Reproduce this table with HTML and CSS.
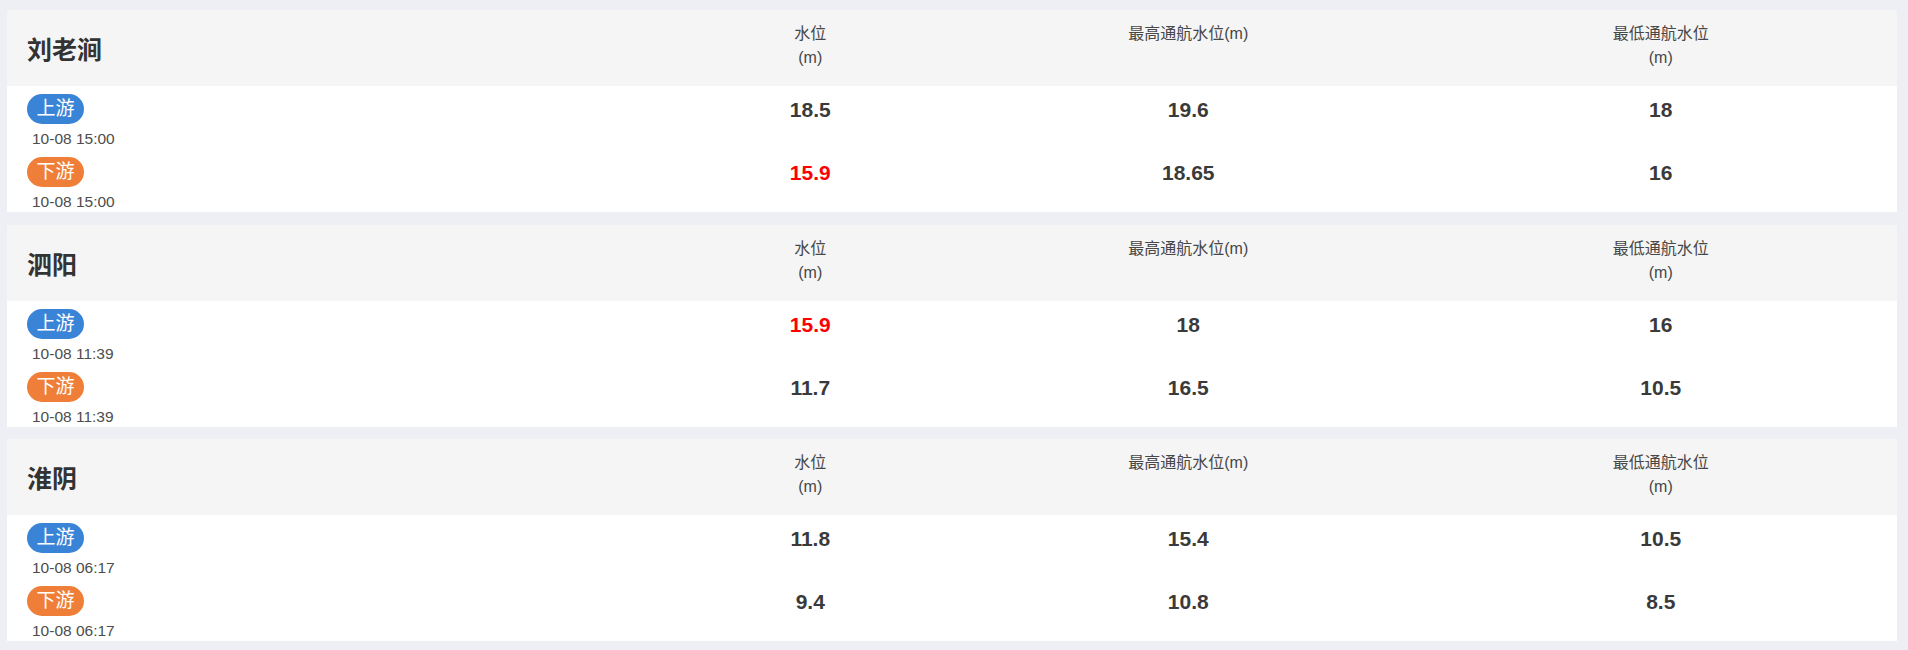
FILE: index.html
```html
<!DOCTYPE html>
<html lang="zh">
<head>
<meta charset="utf-8">
<title>水位</title>
<link rel="stylesheet" href="styles.css">
</head>
<body>
<div class="list">
  <section class="card">
    <div class="grid head">
      <div class="name">刘老涧</div>
      <div class="col">水位<br>(m)</div>
      <div class="col">最高通航水位(m)</div>
      <div class="col">最低通航水位<br>(m)</div>
    </div>
    <div class="grid item">
      <div class="loc"><span class="tag up">上游</span><span class="time">10-08 15:00</span></div>
      <div class="val">18.5</div>
      <div class="val">19.6</div>
      <div class="val">18</div>
    </div>
    <div class="grid item">
      <div class="loc"><span class="tag down">下游</span><span class="time">10-08 15:00</span></div>
      <div class="val warn">15.9</div>
      <div class="val">18.65</div>
      <div class="val">16</div>
    </div>
  </section>
  <section class="card">
    <div class="grid head">
      <div class="name">泗阳</div>
      <div class="col">水位<br>(m)</div>
      <div class="col">最高通航水位(m)</div>
      <div class="col">最低通航水位<br>(m)</div>
    </div>
    <div class="grid item">
      <div class="loc"><span class="tag up">上游</span><span class="time">10-08 11:39</span></div>
      <div class="val warn">15.9</div>
      <div class="val">18</div>
      <div class="val">16</div>
    </div>
    <div class="grid item">
      <div class="loc"><span class="tag down">下游</span><span class="time">10-08 11:39</span></div>
      <div class="val">11.7</div>
      <div class="val">16.5</div>
      <div class="val">10.5</div>
    </div>
  </section>
  <section class="card">
    <div class="grid head">
      <div class="name">淮阴</div>
      <div class="col">水位<br>(m)</div>
      <div class="col">最高通航水位(m)</div>
      <div class="col">最低通航水位<br>(m)</div>
    </div>
    <div class="grid item">
      <div class="loc"><span class="tag up">上游</span><span class="time">10-08 06:17</span></div>
      <div class="val">11.8</div>
      <div class="val">15.4</div>
      <div class="val">10.5</div>
    </div>
    <div class="grid item">
      <div class="loc"><span class="tag down">下游</span><span class="time">10-08 06:17</span></div>
      <div class="val">9.4</div>
      <div class="val">10.8</div>
      <div class="val">8.5</div>
    </div>
  </section>
</div>
</body>
</html>
```
FILE: styles.css
```css
html, body {
  margin: 0;
  padding: 0;
  background: #eeeff4;
}
body {
  padding: 10px 11px 0 7px;
  font-family: "Liberation Sans", Arial, "Noto Sans CJK SC", sans-serif;
  color: #333;
}
.list {
  display: flex;
  flex-direction: column;
  gap: 12.5px;
}
.card {
  background: #fff;
}
.grid {
  display: grid;
  grid-template-columns: 35% 15% 25% 25%;
}
.head {
  height: 76px;
  background: #f5f5f6;
}
.name {
  align-self: center;
  padding-left: 20px;
  font-size: 25px;
  font-weight: bold;
  color: #333;
  font-family: "Noto Sans CJK SC", sans-serif;
}
.col {
  padding-top: 12px;
  text-align: center;
  font-size: 16px;
  line-height: 24px;
  color: #474747;
}
.item {
  height: 63px;
}
.loc {
  display: flex;
  flex-direction: column;
  align-items: flex-start;
  padding: 8px 0 0 20px;
}
.tag {
  display: block;
  height: 30px;
  line-height: 30px;
  padding: 0 9.5px;
  border-radius: 15px;
  color: #fff;
  font-size: 19px;
}
.tag.up {
  background: #3a84d8;
}
.tag.down {
  background: #ee7e38;
}
.time {
  margin: 4px 0 0 5px;
  font-size: 15.5px;
  line-height: 21px;
  color: #4d4d4d;
}
.val {
  padding-top: 8px;
  line-height: 32px;
  text-align: center;
  font-size: 21px;
  font-weight: bold;
  color: #3a3a3a;
}
.val.warn {
  color: #f00;
}
```
